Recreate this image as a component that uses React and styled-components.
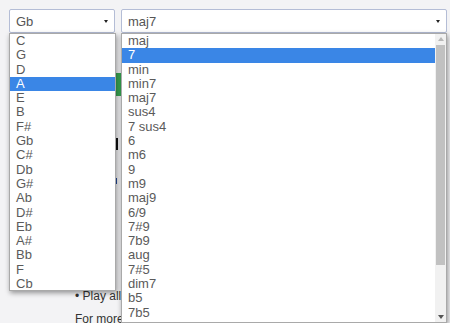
import React from 'react';
import styled, { createGlobalStyle } from 'styled-components';

const Global = createGlobalStyle`
  body { margin: 0; background: #f3f3f5; font-family: "Liberation Sans", Arial, sans-serif; }
`;

const Page = styled.div`
  position: relative;
  width: 450px;
  height: 323px;
  overflow: hidden;
`;

const Toolbar = styled.div`
  display: flex;
  gap: 6px;
  padding: 9px 3px 0 9px;
`;

const Select = styled.div`
  box-sizing: border-box;
  width: ${p => p.$w}px;
  height: 24px;
  background: #fff;
  border: 1px solid #b4bdd6;
  border-radius: 2px;
  display: flex;
  align-items: center;
  justify-content: space-between;
  padding: 0 6px 0 6px;
  font-size: 13px;
  color: #555;
`;

const Caret = styled.span`
  width: 0;
  height: 0;
  border-left: 2px solid transparent;
  border-right: 2px solid transparent;
  border-top: 3px solid #222;
`;

const Content = styled.div`
  padding: 40px 0 0 75px;
  font-size: 12px;
  color: #333;
`;

const GreenButton = styled.div`
  width: 110px;
  height: 23px;
  background: #3aa853;
  border-radius: 3px;
`;

const Heading = styled.div`
  margin-top: 42px;
  height: 12px;
  width: 120px;
  border-left: 3px solid #111;
  border-right: 3px solid #111;
  margin-left: 40px;
`;

const LinkBar = styled.div`
  margin: 28px 0 0 40px;
  width: 60px;
  height: 6px;
  border-left: 2px solid #234a9a;
`;

const Line = styled.div`
  margin-top: ${p => p.$mt}px;
  line-height: 14px;
  white-space: nowrap;
`;

const Link = styled.span`
  color: #2a5db0;
`;

const List = styled.div`
  position: absolute;
  box-sizing: border-box;
  left: ${p => p.$x}px;
  top: 33px;
  width: ${p => p.$w}px;
  height: ${p => p.$h}px;
  background: #fff;
  border: 1px solid #a9a9a9;
  box-shadow: 1px 2px 5px rgba(0, 0, 0, 0.4);
  display: flex;
  overflow: hidden;
`;

const Items = styled.div`
  flex: 1;
  display: flex;
  flex-direction: column;
`;

const Item = styled.div`
  height: 14.3px;
  line-height: 14.3px;
  padding-left: 6px;
  font-size: 13px;
  color: ${p => p.$on ? '#fff' : '#5a5a5a'};
  background: ${p => p.$on ? '#3a86e6' : 'transparent'};
  white-space: pre;
`;

const Scrollbar = styled.div`
  width: 11px;
  background: #f1f1f1;
  display: flex;
  flex-direction: column;
  align-items: center;
  padding: 3px 0;
  box-sizing: border-box;
`;

const Arrow = styled.div`
  width: 0;
  height: 0;
  border-left: 3px solid transparent;
  border-right: 3px solid transparent;
  ${p => p.$up ? 'border-bottom: 4px solid #b8b8b8;' : 'border-top: 4px solid #555;'}
`;

const Track = styled.div`
  flex: 1;
  width: 100%;
  padding: 4px 0 50px;
  box-sizing: border-box;
`;

const Thumb = styled.div`
  height: 100%;
  margin: 0 1px;
  background: #c1c1c1;
`;

const roots = ['C', 'G', 'D', 'A', 'E', 'B', 'F#', 'Gb', 'C#', 'Db', 'G#', 'Ab', 'D#', 'Eb', 'A#', 'Bb', 'F', 'Cb'];
const kinds = ['maj', '7', 'min', 'min7', 'maj7', 'sus4', '7 sus4', '6', 'm6', '9', 'm9', 'maj9', '6/9', '7#9', '7b9', 'aug', '7#5', 'dim7', 'b5', '7b5'];

export default function App() {
  return (
    <Page>
      <Global />
      <Toolbar>
        <Select $w={106}>Gb<Caret /></Select>
        <Select $w={326}>maj7<Caret /></Select>
      </Toolbar>
      <Content>
        <GreenButton />
        <Heading />
        <LinkBar />
        <Line $mt={105}>• Play all</Line>
        <Line $mt={9}>For more chords tutorials, check the lessons section on <Link>guitar chords</Link></Line>
      </Content>
      <List $x={9} $w={107} $h={258}>
        <Items>
          {roots.map(r => <Item key={r} $on={r === 'A'}>{r}</Item>)}
        </Items>
      </List>
      <List $x={121} $w={326} $h={290}>
        <Items>
          {kinds.map(k => <Item key={k} $on={k === '7'}>{k}</Item>)}
        </Items>
        <Scrollbar>
          <Arrow $up />
          <Track><Thumb /></Track>
          <Arrow />
        </Scrollbar>
      </List>
    </Page>
  );
}
